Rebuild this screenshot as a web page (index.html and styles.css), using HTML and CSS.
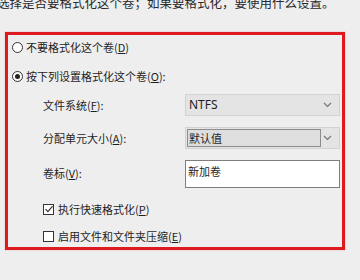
FILE: index.html
```html
<!DOCTYPE html>
<html lang="zh-CN">
<head>
<meta charset="utf-8">
<link rel="stylesheet" href="styles.css">
</head>
<body>
<div class="page">
  <p class="desc">选择是否要格式化这个卷；如果要格式化，要使用什么设置。</p>
  <div class="box">
    <label class="opt opt1"><span class="radio"></span><span>不要格式化这个卷(<u>D</u>)</span></label>
    <label class="opt opt2"><span class="radio on"></span><span>按下列设置格式化这个卷(<u>O</u>):</span></label>
    <div class="form">
      <span class="lbl">文件系统(<u>F</u>):</span>
      <div class="select">
        <span class="val latin">NTFS</span>
        <svg class="chev" width="9" height="6" viewBox="0 0 9 6"><path d="M1 1l3.5 3.5L8 1" fill="none" stroke="#777" stroke-width="1.2"/></svg>
      </div>
      <span class="lbl">分配单元大小(<u>A</u>):</span>
      <div class="select">
        <span class="val focus">默认值</span>
        <svg class="chev" width="9" height="6" viewBox="0 0 9 6"><path d="M1 1l3.5 3.5L8 1" fill="none" stroke="#777" stroke-width="1.2"/></svg>
      </div>
      <span class="lbl">卷标(<u>V</u>):</span>
      <div class="input">新加卷</div>
    </div>
    <label class="chk chk1"><span class="cbox"><svg width="10" height="10" viewBox="0 0 10 10"><path d="M1.5 5.2l2.4 2.4L8.6 2.2" fill="none" stroke="#333" stroke-width="1.2"/></svg></span><span>执行快速格式化(<u>P</u>)</span></label>
    <label class="chk chk2"><span class="cbox"></span><span>启用文件和文件夹压缩(<u>E</u>)</span></label>
  </div>
</div>
</body>
</html>
```
FILE: styles.css
```css
html, body {
  margin: 0;
  padding: 0;
  background: #eeeeee;
  overflow: hidden;
}
body {
  font-family: "Noto Sans CJK SC", "Noto Sans", sans-serif;
  color: #1e1e1e;
  font-size: 11px;
}
.page {
  width: 360px;
  height: 280px;
}
.desc {
  margin: -5px 0 0 -3px;
  font-size: 12.5px;
  line-height: 16px;
  white-space: nowrap;
  color: #2a2a2a;
}
u {
  text-decoration: underline;
  text-underline-offset: 1px;
}
.box {
  margin: 21px 0 0 5px;
  width: 340px;
  height: 218px;
  box-sizing: border-box;
  border: 3px solid #dc1a1f;
  box-shadow: 0 0 1px rgba(220, 26, 31, 0.5);
  padding: 0 0 0 4px;
  display: flex;
  flex-direction: column;
}
.opt {
  display: flex;
  align-items: center;
  gap: 3px;
  height: 16px;
  line-height: 16px;
}
.opt1 { margin-top: 4px; }
.opt2 { margin-top: 13px; }
.radio {
  width: 9px;
  height: 9px;
  border: 1px solid #333;
  border-radius: 50%;
  background: #fff;
  box-sizing: content-box;
  display: flex;
  align-items: center;
  justify-content: center;
  flex: none;
}
.radio.on::after {
  content: "";
  width: 5px;
  height: 5px;
  border-radius: 50%;
  background: #222;
}
.form {
  margin: 10px 0 0 31px;
  display: grid;
  grid-template-columns: 142px 155px;
  grid-template-rows: 22px 22px 28px;
  row-gap: 11px;
  align-items: center;
}
.form .lbl:nth-of-type(3) {
  align-self: start;
  margin-top: 5px;
}
.select {
  height: 22px;
  box-sizing: border-box;
  background: #e4e4e4;
  border: 1px solid #d2d2d2;
  display: flex;
  align-items: center;
  padding: 0 7px 0 2px;
}
.val {
  flex: 1;
  line-height: 14px;
}
.latin {
  font-family: "Noto Sans", "Liberation Sans", sans-serif;
  font-size: 12px;
  padding-left: 1px;
}
.val.focus {
  flex: none;
  width: 134px;
  height: 18px;
  box-sizing: border-box;
  border: 1px solid #8c8c8c;
  background: #dedede;
  line-height: 16px;
  padding-left: 1px;
  margin-left: -1px;
}
.val.focus + .chev {
  margin-left: auto;
}
.chev {
  flex: none;
}
.input {
  height: 28px;
  box-sizing: border-box;
  background: #fff;
  border: 1px solid #7e7e7e;
  padding: 2px 0 0 2px;
  line-height: 16px;
}
.chk {
  display: flex;
  align-items: center;
  gap: 4px;
  margin-left: 31px;
  height: 16px;
  line-height: 16px;
}
.chk1 { margin-top: 13px; }
.chk2 { margin-top: 11px; }
.cbox {
  width: 9px;
  height: 9px;
  border: 1px solid #333;
  background: #fff;
  display: flex;
  align-items: center;
  justify-content: center;
  flex: none;
}
.cbox svg { display: block; flex: none; }
```
